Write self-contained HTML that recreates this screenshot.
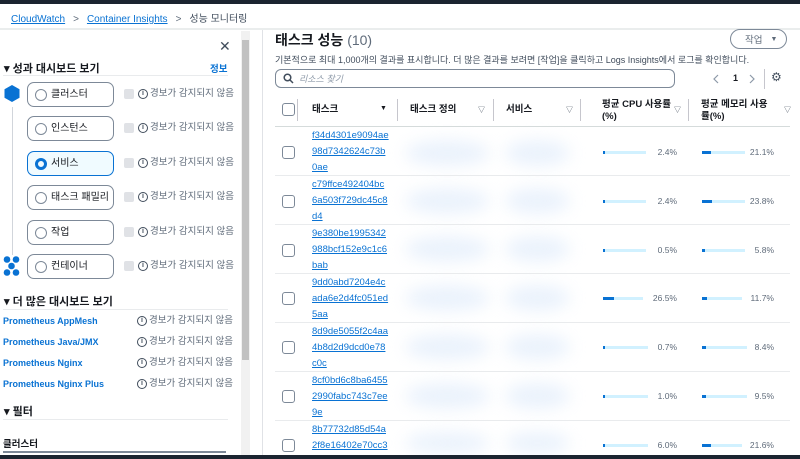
<!DOCTYPE html>
<html><head><meta charset="utf-8"><style>
*{box-sizing:border-box;margin:0;padding:0}
body{width:800px;height:459px;overflow:hidden;background:#fff;font-family:"Liberation Sans","Noto Sans CJK KR",sans-serif;color:#16191f;position:relative;font-size:10px}
.a{position:absolute}
.top{left:0;top:0;width:800px;height:4px;background:#1b2430}
.bot{left:0;top:455px;width:800px;height:4px;background:#1b2430}
.lnk{color:#0972d3;text-decoration:underline}
.radio{position:absolute;left:27px;width:87px;height:25px;border:1.5px solid #7d8998;border-radius:7px;font-size:10px;padding-left:23px;display:flex;align-items:center;line-height:1}
.radio:before{content:"";position:absolute;left:7px;top:6px;width:10px;height:10px;border:1.5px solid #7d8998;border-radius:50%}
.radio.sel{background:#f0fbff;border-color:#0972d3}
.radio.sel:before{border:3px solid #0972d3;width:6px;height:6px}
.cb{position:absolute;width:10px;height:10px;background:#e0e2e6;border-radius:2px}
.al{position:absolute;font-size:9.5px;color:#5f6b7a;white-space:nowrap;display:flex;align-items:center;height:12px;line-height:1}
.al i{display:inline-block;width:10px;height:10px;border:1.3px solid #414d5c;border-radius:50%;font-style:normal;font-size:7px;line-height:8px;text-align:center;color:#414d5c;font-weight:bold;margin-right:2px}
.h{position:absolute;font-size:11px;font-weight:bold}
.hr{position:absolute;height:1px;background:#e9ebed}
.pl{position:absolute;left:3px;font-size:9px;font-weight:bold;color:#0972d3}
.tc{position:absolute;width:13px;height:13px;border:1.5px solid #7d8998;border-radius:3px}
.th{position:absolute;top:95px;font-size:9.5px;font-weight:bold;line-height:12px}
.tri{position:absolute;font-size:7px;color:#414d5c}
.dv{position:absolute;top:99px;width:1px;height:22px;background:#c6c6cd}
.id{position:absolute;left:312px;font-size:9.5px;line-height:16px;color:#0972d3;font-family:"Liberation Sans",sans-serif}
.id span{text-decoration:underline}
.bar{position:absolute;height:3px;background:#d1f1ff}
.bar b{display:block;height:3px;background:#0972d3}
.pc{position:absolute;font-size:8.5px;color:#5f6b7a;text-align:right;width:40px}
.blur{position:absolute;background:#e2edfb;border-radius:50%;filter:blur(8px);opacity:.7}
</style></head><body>
<div class="a top"></div>
<div class="a" style="left:11px;top:10px;font-size:10px"><span class="lnk">CloudWatch</span><span style="color:#5f6b7a;margin:0 8px">&gt;</span><span class="lnk">Container Insights</span><span style="color:#5f6b7a;margin:0 8px">&gt;</span><span style="color:#414d5c">성능 모니터링</span></div>
<div class="a" style="left:0;top:28px;width:800px;height:2px;background:#eaeded"></div>
<div class="a" style="left:262px;top:30px;width:1px;height:425px;background:#e0e2e6"></div>
<div class="a" style="left:241px;top:31px;width:9px;height:424px;background:#f1f1f1"></div>
<div class="a" style="left:242px;top:40px;width:7px;height:320px;background:#c1c1c1"></div>
<div class="a" style="left:219px;top:38px;font-size:14px;color:#414d5c">✕</div>
<div class="h" style="left:4px;top:60px">▾ 성과 대시보드 보기</div>
<div class="a" style="left:210px;top:61px;font-size:9.5px;color:#0972d3;font-weight:bold">정보</div>
<div class="hr" style="left:3px;top:75px;width:225px"></div>
<svg class="a" style="left:4px;top:85px" width="16" height="17" viewBox="0 0 16 17"><polygon points="8,0 15.5,4.2 15.5,12.8 8,17 0.5,12.8 0.5,4.2" fill="#0972d3"/></svg>
<div class="a" style="left:12px;top:107px;width:1px;height:148px;background:#d1d5db"></div>
<svg class="a" style="left:3px;top:256px" width="17" height="20" viewBox="0 0 17 20"><g fill="#0972d3"><circle cx="4" cy="3.5" r="3.3"/><circle cx="13" cy="3.5" r="3.3"/><circle cx="8.5" cy="10" r="3.3"/><circle cx="4" cy="16.5" r="3.3"/><circle cx="13" cy="16.5" r="3.3"/></g></svg>
<div class="radio" style="top:82px">클러스터</div>
<div class="radio" style="top:116px">인스턴스</div>
<div class="radio sel" style="top:151px">서비스</div>
<div class="radio" style="top:185px">태스크 패밀리</div>
<div class="radio" style="top:220px">작업</div>
<div class="radio" style="top:254px">컨테이너</div>
<div class="cb" style="left:124px;top:89px"></div><div class="al" style="left:138px;top:88px"><i>i</i>경보가 감지되지 않음</div>
<div class="cb" style="left:124px;top:123px"></div><div class="al" style="left:138px;top:122px"><i>i</i>경보가 감지되지 않음</div>
<div class="cb" style="left:124px;top:158px"></div><div class="al" style="left:138px;top:157px"><i>i</i>경보가 감지되지 않음</div>
<div class="cb" style="left:124px;top:192px"></div><div class="al" style="left:138px;top:191px"><i>i</i>경보가 감지되지 않음</div>
<div class="cb" style="left:124px;top:227px"></div><div class="al" style="left:138px;top:226px"><i>i</i>경보가 감지되지 않음</div>
<div class="cb" style="left:124px;top:261px"></div><div class="al" style="left:138px;top:260px"><i>i</i>경보가 감지되지 않음</div>
<div class="h" style="left:4px;top:293px">▾ 더 많은 대시보드 보기</div>
<div class="hr" style="left:3px;top:309px;width:225px"></div>
<div class="pl" style="top:316px">Prometheus AppMesh</div><div class="al" style="left:137px;top:315px"><i>i</i>경보가 감지되지 않음</div>
<div class="pl" style="top:337px">Prometheus Java/JMX</div><div class="al" style="left:137px;top:336px"><i>i</i>경보가 감지되지 않음</div>
<div class="pl" style="top:358px">Prometheus Nginx</div><div class="al" style="left:137px;top:357px"><i>i</i>경보가 감지되지 않음</div>
<div class="pl" style="top:379px">Prometheus Nginx Plus</div><div class="al" style="left:137px;top:378px"><i>i</i>경보가 감지되지 않음</div>
<div class="h" style="left:4px;top:403px">▾ 필터</div>
<div class="hr" style="left:3px;top:419px;width:225px"></div>
<div class="a" style="left:3px;top:436px;font-size:9.5px;font-weight:bold">클러스터</div>
<div class="a" style="left:3px;top:451px;width:223px;height:2px;background:#7d8998"></div>

<div class="a" style="left:275px;top:30px;font-size:14px;font-weight:bold">태스크 성능 <span style="font-weight:normal;color:#5f6b7a">(10)</span></div>
<div class="a" style="left:730px;top:29px;width:57px;height:20px;border:1.5px solid #7d8998;border-radius:10px;font-size:9.5px;color:#5f6b7a;display:flex;align-items:center;padding-left:14px">작업 <span style="font-size:7px;margin-left:8px">▼</span></div>
<div class="a" style="left:275px;top:53px;font-size:9px;color:#414d5c">기본적으로 최대 1,000개의 결과를 표시합니다. 더 많은 결과를 보려면 [작업]을 클릭하고 Logs Insights에서 로그를 확인합니다.</div>
<div class="a" style="left:275px;top:69px;width:400px;height:19px;border:1.5px solid #7d8998;border-radius:6px"></div>
<svg class="a" style="left:283px;top:73px" width="11" height="11" viewBox="0 0 11 11"><circle cx="4.5" cy="4.5" r="3.3" fill="none" stroke="#414d5c" stroke-width="1.5"/><path d="M7 7L10 10" stroke="#414d5c" stroke-width="1.5"/></svg>
<div class="a" style="left:299px;top:72px;font-size:9px;color:#8d99a8;font-style:italic">리소스 찾기</div>
<svg class="a" style="left:713px;top:74px" width="50" height="10" viewBox="0 0 50 10"><path d="M5 1L1 5L5 9" fill="none" stroke="#8d99a8" stroke-width="1.2"/><path d="M37 1L41 5L37 9" fill="none" stroke="#8d99a8" stroke-width="1.2"/></svg>
<div class="a" style="left:733px;top:73px;font-size:9px;font-weight:bold">1</div>
<div class="a" style="left:764px;top:69px;width:1px;height:20px;background:#c6c6cd"></div>
<div class="a" style="left:771px;top:70px;font-size:12px;color:#414d5c">⚙</div>

<div class="blur" style="left:405px;top:140px;width:85px;height:26px"></div><div class="blur" style="left:505px;top:140px;width:65px;height:26px"></div>
<div class="blur" style="left:405px;top:188px;width:85px;height:26px"></div><div class="blur" style="left:505px;top:188px;width:65px;height:26px"></div>
<div class="blur" style="left:405px;top:236px;width:85px;height:26px"></div><div class="blur" style="left:505px;top:236px;width:65px;height:26px"></div>
<div class="blur" style="left:405px;top:285px;width:85px;height:26px"></div><div class="blur" style="left:505px;top:285px;width:65px;height:26px"></div>
<div class="blur" style="left:405px;top:334px;width:85px;height:26px"></div><div class="blur" style="left:505px;top:334px;width:65px;height:26px"></div>
<div class="blur" style="left:405px;top:383px;width:85px;height:26px"></div><div class="blur" style="left:505px;top:383px;width:65px;height:26px"></div>
<div class="blur" style="left:405px;top:432px;width:85px;height:22px"></div><div class="blur" style="left:505px;top:432px;width:65px;height:22px"></div>

<div class="tc" style="left:282px;top:103px"></div>
<div class="dv" style="left:297px"></div>
<div class="th" style="left:312px;top:104px">태스크</div><div class="tri" style="left:380px;top:105px;color:#16191f">▼</div>
<div class="dv" style="left:397px"></div>
<div class="th" style="left:410px;top:104px">태스크 정의</div><div class="tri" style="left:478px;top:105px">▽</div>
<div class="dv" style="left:493px"></div>
<div class="th" style="left:506px;top:104px">서비스</div><div class="tri" style="left:566px;top:105px">▽</div>
<div class="dv" style="left:580px"></div>
<div class="th" style="left:602px;top:99px">평균 CPU 사용률<br>(%)</div><div class="tri" style="left:674px;top:105px">▽</div>
<div class="dv" style="left:688px"></div>
<div class="th" style="left:701px;top:99px">평균 메모리 사용<br>률(%)</div><div class="tri" style="left:784px;top:105px">▽</div>
<div class="hr" style="left:275px;top:126px;width:515px;background:#d5dbdb"></div>

<div class="hr" style="left:275px;top:175px;width:515px"></div>
<div class="hr" style="left:275px;top:224px;width:515px"></div>
<div class="hr" style="left:275px;top:273px;width:515px"></div>
<div class="hr" style="left:275px;top:322px;width:515px"></div>
<div class="hr" style="left:275px;top:371px;width:515px"></div>
<div class="hr" style="left:275px;top:420px;width:515px"></div>

<div class="tc" style="left:282px;top:146px"></div><div class="id" style="top:128px"><span>f34d4301e9094ae</span><br><span>98d7342624c73b</span><br><span>0ae</span></div>
<div class="bar" style="left:603px;top:151px;width:43px"><b style="width:2px"></b></div><div class="pc" style="left:637px;top:147px">2.4%</div>
<div class="bar" style="left:702px;top:151px;width:43px"><b style="width:9px"></b></div><div class="pc" style="left:734px;top:147px">21.1%</div>

<div class="tc" style="left:282px;top:195px"></div><div class="id" style="top:177px"><span>c79ffce492404bc</span><br><span>6a503f729dc45c8</span><br><span>d4</span></div>
<div class="bar" style="left:603px;top:200px;width:43px"><b style="width:2px"></b></div><div class="pc" style="left:637px;top:196px">2.4%</div>
<div class="bar" style="left:702px;top:200px;width:43px"><b style="width:10px"></b></div><div class="pc" style="left:734px;top:196px">23.8%</div>

<div class="tc" style="left:282px;top:244px"></div><div class="id" style="top:226px"><span>9e380be1995342</span><br><span>988bcf152e9c1c6</span><br><span>bab</span></div>
<div class="bar" style="left:603px;top:249px;width:43px"><b style="width:2px"></b></div><div class="pc" style="left:637px;top:245px">0.5%</div>
<div class="bar" style="left:702px;top:249px;width:43px"><b style="width:3px"></b></div><div class="pc" style="left:734px;top:245px">5.8%</div>

<div class="tc" style="left:282px;top:292px"></div><div class="id" style="top:275px"><span>9dd0abd7204e4c</span><br><span>ada6e2d4fc051ed</span><br><span>5aa</span></div>
<div class="bar" style="left:603px;top:297px;width:40px"><b style="width:11px"></b></div><div class="pc" style="left:637px;top:293px">26.5%</div>
<div class="bar" style="left:702px;top:297px;width:40px"><b style="width:5px"></b></div><div class="pc" style="left:734px;top:293px">11.7%</div>

<div class="tc" style="left:282px;top:341px"></div><div class="id" style="top:324px"><span>8d9de5055f2c4aa</span><br><span>4b8d2d9dcd0e78</span><br><span>c0c</span></div>
<div class="bar" style="left:603px;top:346px;width:45px"><b style="width:2px"></b></div><div class="pc" style="left:637px;top:342px">0.7%</div>
<div class="bar" style="left:702px;top:346px;width:45px"><b style="width:4px"></b></div><div class="pc" style="left:734px;top:342px">8.4%</div>

<div class="tc" style="left:282px;top:390px"></div><div class="id" style="top:373px"><span>8cf0bd6c8ba6455</span><br><span>2990fabc743c7ee</span><br><span>9e</span></div>
<div class="bar" style="left:603px;top:395px;width:45px"><b style="width:2px"></b></div><div class="pc" style="left:637px;top:391px">1.0%</div>
<div class="bar" style="left:702px;top:395px;width:45px"><b style="width:4px"></b></div><div class="pc" style="left:734px;top:391px">9.5%</div>

<div class="tc" style="left:282px;top:439px"></div><div class="id" style="top:422px"><span>8b77732d85d54a</span><br><span>2f8e16402e70cc3</span></div>
<div class="bar" style="left:603px;top:444px;width:45px"><b style="width:2px"></b></div><div class="pc" style="left:637px;top:440px">6.0%</div>
<div class="bar" style="left:702px;top:444px;width:40px"><b style="width:9px"></b></div><div class="pc" style="left:734px;top:440px">21.6%</div>

<div class="a bot"></div>
</body></html>
